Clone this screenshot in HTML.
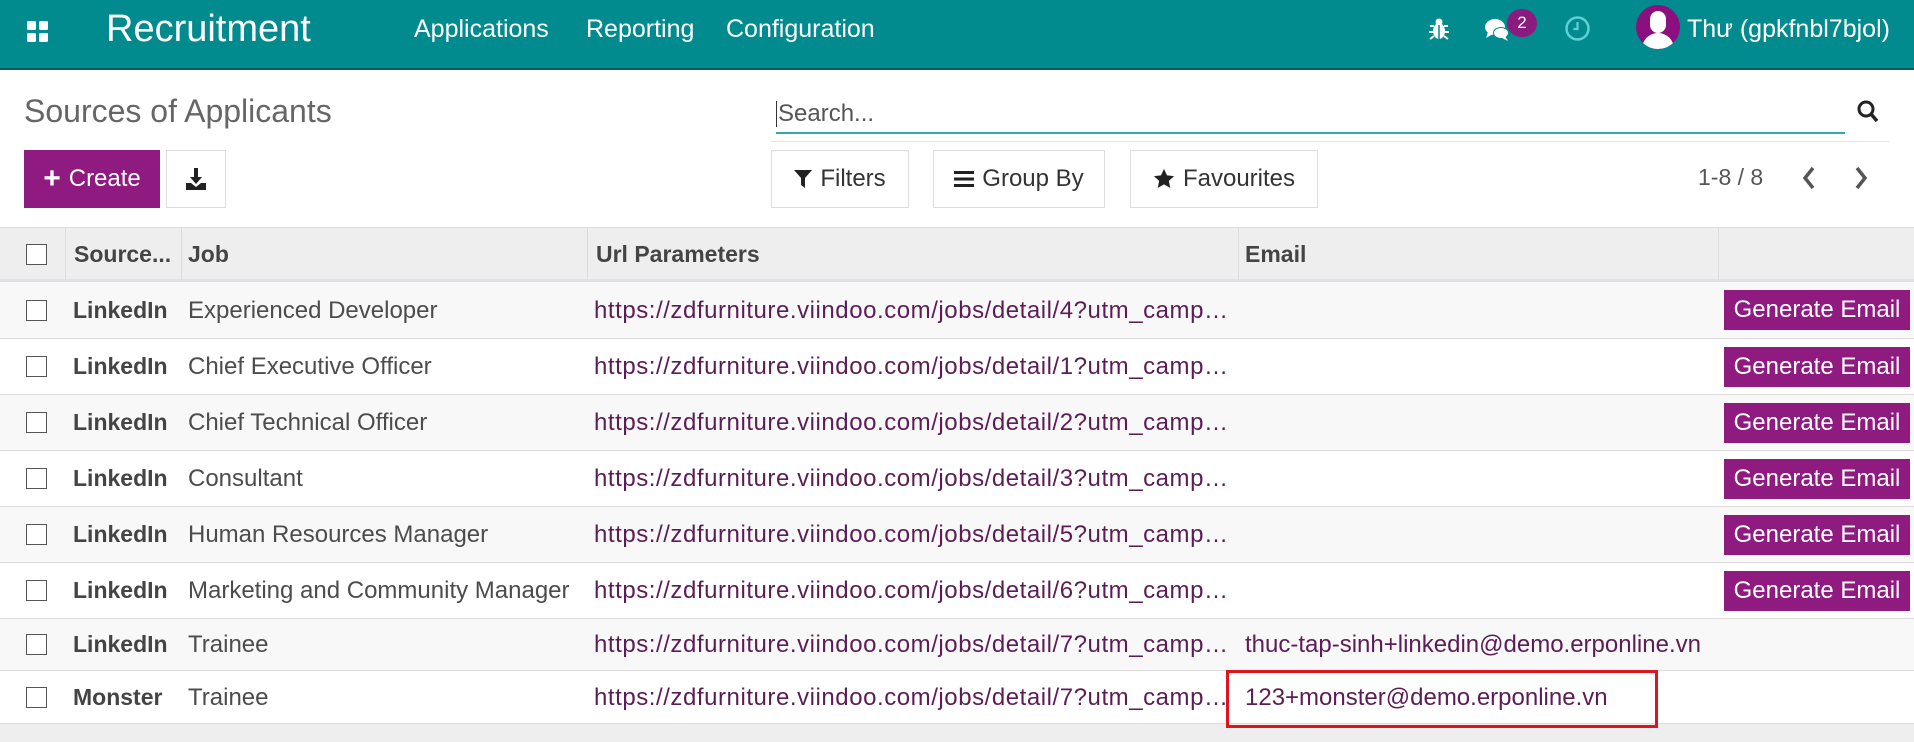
<!DOCTYPE html>
<html><head><meta charset="utf-8"><style>
*{box-sizing:border-box;margin:0;padding:0}
body{width:1914px;height:742px;overflow:hidden;background:#fff;font-family:"Liberation Sans","Noto Sans CJK SC",sans-serif;color:#4c4c4c;position:relative}
.abs{position:absolute}
.nav{left:0;top:0;width:1914px;height:70px;background:#018b8f;border-bottom:2px solid #0a5b5e}
.nav .t{color:#fff;white-space:nowrap}
.btn{position:absolute;top:150px;height:58px;border:1px solid #ddd;background:#fff;color:#333;font-size:24px;display:flex;align-items:center;justify-content:center;gap:8px}
.hdr{left:0;top:227px;width:1914px;height:55px;background:#eeeeee;border-top:1px solid #ddd;border-bottom:3px solid #dee2e6}
.hdr span{position:absolute;top:13px;font-weight:bold;font-size:23px;color:#444}
.vl{position:absolute;top:0;width:1px;height:52px;background:#dcdcdc}
.row{position:absolute;left:0;width:1914px;border-bottom:1px solid #dcdcdc;font-size:24px}
.row span{position:absolute;white-space:nowrap}
.row b{font-size:23px}
.cb{position:absolute;left:26px;width:21px;height:21px;border:1.5px solid #555;background:#fff}
.ge{position:absolute;left:1724px;width:186px;height:40px;background:#8f1a80;color:#fff;font-size:24px;display:flex;align-items:center;justify-content:center}
.u{color:#5c1d56;left:594px;letter-spacing:0.55px}
</style></head><body>
<div class="abs nav">
 <svg class="abs" style="left:26px;top:20px" width="24" height="24" viewBox="0 0 24 24" fill="#fff"><rect x="1" y="1" width="9" height="9" rx="1.5"/><rect x="13" y="1" width="9" height="9" rx="1.5"/><rect x="1" y="13" width="9" height="9" rx="1.5"/><rect x="13" y="13" width="9" height="9" rx="1.5"/></svg>
 <div class="abs t" style="left:106px;top:8px;font-size:38px">Recruitment</div>
 <div class="abs t" style="left:414px;top:15px;font-size:25px">Applications</div>
 <div class="abs t" style="left:586px;top:15px;font-size:25px">Reporting</div>
 <div class="abs t" style="left:726px;top:15px;font-size:25px">Configuration</div>
 <svg class="abs" style="left:1428px;top:17px" width="22" height="24" viewBox="0 0 22 24" fill="#fff"><ellipse cx="11" cy="14" rx="6" ry="8"/><circle cx="11" cy="5" r="3.5"/><path d="M2 9h4M16 9h4M1 15h5M16 15h5M2 22l4-3M20 22l-4-3" stroke="#fff" stroke-width="2"/><path d="M11 8v14" stroke="#018b8f" stroke-width="1.5"/></svg>
 <svg class="abs" style="left:1484px;top:17px" width="28" height="26" viewBox="0 0 28 26" fill="#fff"><ellipse cx="11" cy="10" rx="10" ry="8"/><path d="M4 15l-2 6 7-4z"/><ellipse cx="17" cy="16" rx="8" ry="6" fill="#018b8f"/><ellipse cx="17" cy="16" rx="7" ry="5"/><path d="M21 19l3 5-6-3z"/></svg>
 <div class="abs" style="left:1507px;top:9px;width:30px;height:28px;border-radius:14px;background:#8c1b7f;color:#fff;font-size:17px;text-align:center;line-height:28px">2</div>
 <svg class="abs" style="left:1564px;top:15px" width="27" height="27" viewBox="0 0 27 27"><circle cx="13.5" cy="13.5" r="11" fill="none" stroke="#5fd0d4" stroke-width="2.5"/><path d="M13.5 7v7h-4" fill="none" stroke="#5fd0d4" stroke-width="2.2"/></svg>
 <div class="abs" style="left:1636px;top:5px;width:44px;height:44px;border-radius:50%;background:#8c0f80;overflow:hidden"><div class="abs" style="left:14px;top:6px;width:16px;height:22px;border-radius:8px;background:#fff"></div><div class="abs" style="left:6px;top:28px;width:32px;height:24px;border-radius:16px 16px 0 0;background:#fff"></div></div>
 <div class="abs t" style="left:1687px;top:15px;font-size:25px">Thư (gpkfnbl7bjol)</div>
</div>

<div class="abs" style="left:24px;top:93px;font-size:32px;color:#666">Sources of Applicants</div>
<div class="abs" style="left:776px;top:101px;font-size:24px;color:#555;border-left:1.5px solid #333;padding-left:1px;line-height:26px">Search...</div>
<div class="abs" style="left:776px;top:132px;width:1069px;height:2px;background:#3aa6ab"></div>
<div class="abs" style="left:771px;top:141px;width:1118px;height:1px;background:#e4e4e4"></div>
<svg class="abs" style="left:1857px;top:100px" width="22" height="24" viewBox="0 0 22 24"><circle cx="9" cy="9" r="7" fill="none" stroke="#222" stroke-width="3"/><path d="M14 14l6 7" stroke="#222" stroke-width="3.5"/></svg>

<div class="btn" style="left:24px;width:136px;background:#8f1a80;border-color:#8f1a80;color:#fff"><b style="font-size:30px;line-height:1">+</b>Create</div>
<div class="btn" style="left:166px;width:60px"><svg width="22" height="24" viewBox="0 0 22 24" fill="#222"><path d="M9 1h4v9h4l-6 7-6-7h4z"/><path d="M1 16h5l5 4 5-4h5v7H1z"/></svg></div>
<div class="btn" style="left:771px;width:138px"><svg width="18" height="20" viewBox="0 0 18 20" fill="#222"><path d="M0 1h18l-7 8v10l-4-3V9z"/></svg>Filters</div>
<div class="btn" style="left:933px;width:172px"><svg width="20" height="18" viewBox="0 0 20 18" fill="#222"><rect y="1" width="20" height="3"/><rect y="7.5" width="20" height="3"/><rect y="14" width="20" height="3"/></svg>Group By</div>
<div class="btn" style="left:1130px;width:188px"><svg width="22" height="22" viewBox="0 0 24 24" fill="#222"><path d="M12 1l3.3 7 7.7.9-5.7 5.2 1.5 7.6L12 17.9 5.2 21.7l1.5-7.6L1 8.9 8.7 8z"/></svg>Favourites</div>
<div class="abs" style="left:1698px;top:164px;font-size:23px;color:#555">1-8 / 8</div>
<svg class="abs" style="left:1801px;top:166px" width="16" height="24" viewBox="0 0 16 24"><path d="M12 2L4 12l8 10" fill="none" stroke="#555" stroke-width="3.5"/></svg>
<svg class="abs" style="left:1853px;top:166px" width="16" height="24" viewBox="0 0 16 24"><path d="M4 2l8 10-8 10" fill="none" stroke="#555" stroke-width="3.5"/></svg>

<div class="abs hdr">
 <div class="cb" style="top:16px"></div>
 <div class="vl" style="left:65px"></div><div class="vl" style="left:181px"></div><div class="vl" style="left:587px"></div><div class="vl" style="left:1238px"></div><div class="vl" style="left:1718px"></div>
 <span style="left:74px">Source...</span><span style="left:188px">Job</span><span style="left:596px">Url Parameters</span><span style="left:1245px">Email</span>
</div>

<div class="row" style="top:282px;height:57px;background:#f8f8f8"><div class="cb" style="top:18px"></div><span style="left:73px;top:15px"><b style="color:#444">LinkedIn</b></span><span style="left:188px;top:15px">Experienced Developer</span><span class="u" style="top:15px">https://zdfurniture.viindoo.com/jobs/detail/4?utm_camp…</span><div class="ge" style="top:8px">Generate Email</div></div>
<div class="row" style="top:339px;height:56px;background:#fff"><div class="cb" style="top:17px"></div><span style="left:73px;top:14px"><b style="color:#444">LinkedIn</b></span><span style="left:188px;top:14px">Chief Executive Officer</span><span class="u" style="top:14px">https://zdfurniture.viindoo.com/jobs/detail/1?utm_camp…</span><div class="ge" style="top:8px">Generate Email</div></div>
<div class="row" style="top:395px;height:56px;background:#f8f8f8"><div class="cb" style="top:17px"></div><span style="left:73px;top:14px"><b style="color:#444">LinkedIn</b></span><span style="left:188px;top:14px">Chief Technical Officer</span><span class="u" style="top:14px">https://zdfurniture.viindoo.com/jobs/detail/2?utm_camp…</span><div class="ge" style="top:8px">Generate Email</div></div>
<div class="row" style="top:451px;height:56px;background:#fff"><div class="cb" style="top:17px"></div><span style="left:73px;top:14px"><b style="color:#444">LinkedIn</b></span><span style="left:188px;top:14px">Consultant</span><span class="u" style="top:14px">https://zdfurniture.viindoo.com/jobs/detail/3?utm_camp…</span><div class="ge" style="top:8px">Generate Email</div></div>
<div class="row" style="top:507px;height:56px;background:#f8f8f8"><div class="cb" style="top:17px"></div><span style="left:73px;top:14px"><b style="color:#444">LinkedIn</b></span><span style="left:188px;top:14px">Human Resources Manager</span><span class="u" style="top:14px">https://zdfurniture.viindoo.com/jobs/detail/5?utm_camp…</span><div class="ge" style="top:8px">Generate Email</div></div>
<div class="row" style="top:563px;height:56px;background:#fff"><div class="cb" style="top:17px"></div><span style="left:73px;top:14px"><b style="color:#444">LinkedIn</b></span><span style="left:188px;top:14px">Marketing and Community Manager</span><span class="u" style="top:14px">https://zdfurniture.viindoo.com/jobs/detail/6?utm_camp…</span><div class="ge" style="top:8px">Generate Email</div></div>
<div class="row" style="top:619px;height:52px;background:#f8f8f8"><div class="cb" style="top:15px"></div><span style="left:73px;top:12px"><b style="color:#444">LinkedIn</b></span><span style="left:188px;top:12px">Trainee</span><span class="u" style="top:12px">https://zdfurniture.viindoo.com/jobs/detail/7?utm_camp…</span><span style="left:1245px;top:12px;color:#5c1d56">thuc-tap-sinh+linkedin@demo.erponline.vn</span></div>
<div class="row" style="top:671px;height:53px;background:#fff"><div class="cb" style="top:16px"></div><span style="left:73px;top:13px"><b style="color:#444">Monster</b></span><span style="left:188px;top:13px">Trainee</span><span class="u" style="top:13px">https://zdfurniture.viindoo.com/jobs/detail/7?utm_camp…</span><span style="left:1245px;top:13px;color:#5c1d56">123+monster@demo.erponline.vn</span></div>
<div class="abs" style="left:0;top:724px;width:1914px;height:18px;background:#eeeeee"></div>
<div class="abs" style="left:1226px;top:670px;width:432px;height:58px;border:3px solid #e0141c"></div>
</body></html>
